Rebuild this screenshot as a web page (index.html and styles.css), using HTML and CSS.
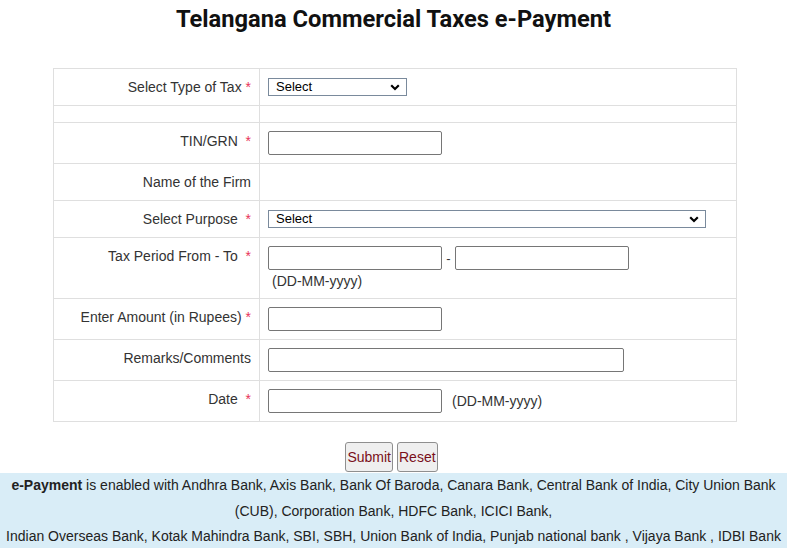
FILE: index.html
```html
<!DOCTYPE html>
<html>
<head>
<meta charset="utf-8">
<title>Telangana Commercial Taxes e-Payment</title>
<link rel="stylesheet" href="styles.css">
</head>
<body>
<h1 class="title">Telangana Commercial Taxes e-Payment</h1>
<form class="pay-form">
<div class="table-wrap">
<table class="form-table">
  <tr class="row-std">
    <td class="lbl">Select Type of Tax <span class="req">*</span></td>
    <td class="fld">
      <select class="sel sel-tax"><option>Select</option></select>
    </td>
  </tr>
  <tr class="row-gap"><td class="lbl"></td><td class="fld"></td></tr>
  <tr class="row-in">
    <td class="lbl">TIN/GRN &nbsp;<span class="req">*</span></td>
    <td class="fld"><input type="text" class="inp"></td>
  </tr>
  <tr class="row-std">
    <td class="lbl">Name of the Firm</td>
    <td class="fld"></td>
  </tr>
  <tr class="row-std">
    <td class="lbl">Select Purpose &nbsp;<span class="req">*</span></td>
    <td class="fld">
      <select class="sel sel-purpose"><option>Select</option></select>
    </td>
  </tr>
  <tr class="row-period">
    <td class="lbl lbl-top">Tax Period From - To &nbsp;<span class="req">*</span></td>
    <td class="fld fld-top">
      <div class="period">
        <input type="text" class="inp"><span class="dash">-</span><input type="text" class="inp">
      </div>
      <div class="hint hint-below">(DD-MM-yyyy)</div>
    </td>
  </tr>
  <tr class="row-in">
    <td class="lbl">Enter Amount (in Rupees) <span class="req">*</span></td>
    <td class="fld"><input type="text" class="inp"></td>
  </tr>
  <tr class="row-in">
    <td class="lbl">Remarks/Comments</td>
    <td class="fld"><input type="text" class="inp inp-wide"></td>
  </tr>
  <tr class="row-in">
    <td class="lbl">Date &nbsp;<span class="req">*</span></td>
    <td class="fld"><input type="text" class="inp"><span class="hint hint-side">(DD-MM-yyyy)</span></td>
  </tr>
</table>
</div>
<div class="actions">
  <button type="button" class="btn">Submit</button>
  <button type="reset" class="btn">Reset</button>
</div>
</form>
<div class="banner">
  <b>e-Payment</b> is enabled with Andhra Bank, Axis Bank, Bank Of Baroda, Canara Bank, Central Bank of India, City Union Bank (CUB), Corporation Bank, HDFC Bank, ICICI Bank,<br>
  Indian Overseas Bank, Kotak Mahindra Bank, SBI, SBH, Union Bank of India, Punjab national bank , Vijaya Bank , IDBI Bank
</div>
</body>
</html>
```
FILE: styles.css
```css
html, body {
  margin: 0;
  padding: 0;
  background: #fff;
}
body {
  font-family: "Liberation Sans", Arial, sans-serif;
  font-size: 14px;
  color: #333;
}
.title {
  font-family: Roboto, "Liberation Sans", sans-serif;
  font-weight: 700;
  font-size: 23.7px;
  line-height: 28px;
  color: #111;
  text-align: center;
  margin: 5px 0 35px;
}
.pay-form {
  margin: 0;
}
.table-wrap {
  padding-left: 3px;
}
.form-table {
  width: 684px;
  margin: 0 auto;
  border-collapse: collapse;
}
.form-table td {
  border: 1px solid #dfdfdf;
  padding: 0 8px;
  vertical-align: middle;
  line-height: 17px;
}
.lbl {
  width: 206px;
  text-align: right;
  box-sizing: border-box;
}
.req {
  color: #e8325a;
}
.row-std td { height: 36px; }
.row-gap td { height: 16px; }
.row-in td { height: 40px; }
.form-table .row-in .lbl { padding-bottom: 3px; height: 37px; }
.row-period td { height: 52px; }
.form-table .lbl-top, .form-table .fld-top {
  vertical-align: top;
}
.form-table .lbl-top { padding-top: 10px; }
.form-table .fld-top { padding-top: 8px; }
.inp {
  box-sizing: border-box;
  width: 174px;
  height: 24px;
  border: 1px solid #767676;
  border-radius: 2px;
  padding: 1px 2px;
  margin: 0;
  font-family: "Liberation Sans", Arial, sans-serif;
  font-size: 13px;
  vertical-align: middle;
  background: #fff;
}
.inp-wide { width: 356px; }
.sel {
  box-sizing: border-box;
  height: 18px;
  border: 1px solid #7a8a9c;
  border-radius: 0;
  padding: 0 0 0 7px;
  margin: 0;
  font-family: "Liberation Sans", Arial, sans-serif;
  font-size: 13px;
  color: #000;
  background: #fff url("data:image/svg+xml,%3Csvg xmlns='http://www.w3.org/2000/svg' width='10' height='7' viewBox='0 0 10 7'%3E%3Cpath d='M1.2 1.3 L5 5 L8.8 1.3' fill='none' stroke='%23000' stroke-width='2.2'/%3E%3C/svg%3E") no-repeat right 6px center;
  appearance: none;
  -webkit-appearance: none;
  vertical-align: middle;
  line-height: 16px;
}
.sel-tax { width: 139px; }
.sel-purpose { width: 438px; }
.period {
  display: flex;
  align-items: center;
}
.dash {
  width: 13px;
  text-align: center;
  font-size: 13px;
}
.hint {
  font-size: 14px;
  color: #333;
}
.hint-below {
  margin: 3px 0 0 4px;
}
.hint-side {
  margin-left: 10px;
  vertical-align: middle;
}
.actions {
  display: flex;
  justify-content: center;
  gap: 4px;
  margin-top: 20px;
  height: 31px;
  padding-right: 4px;
}
.btn {
  font-family: "Liberation Sans", Arial, sans-serif;
  font-size: 14px;
  color: #7a0f1a;
  background: #efefef;
  border: 1px solid #8f8f8f;
  border-radius: 3px;
  padding: 0 1px;
  height: 30px;
  margin: 0;
}
.banner {
  background: #d9edf7;
  text-align: center;
  line-height: 25.5px;
  color: #222;
  padding: 0 4px;
}
```
